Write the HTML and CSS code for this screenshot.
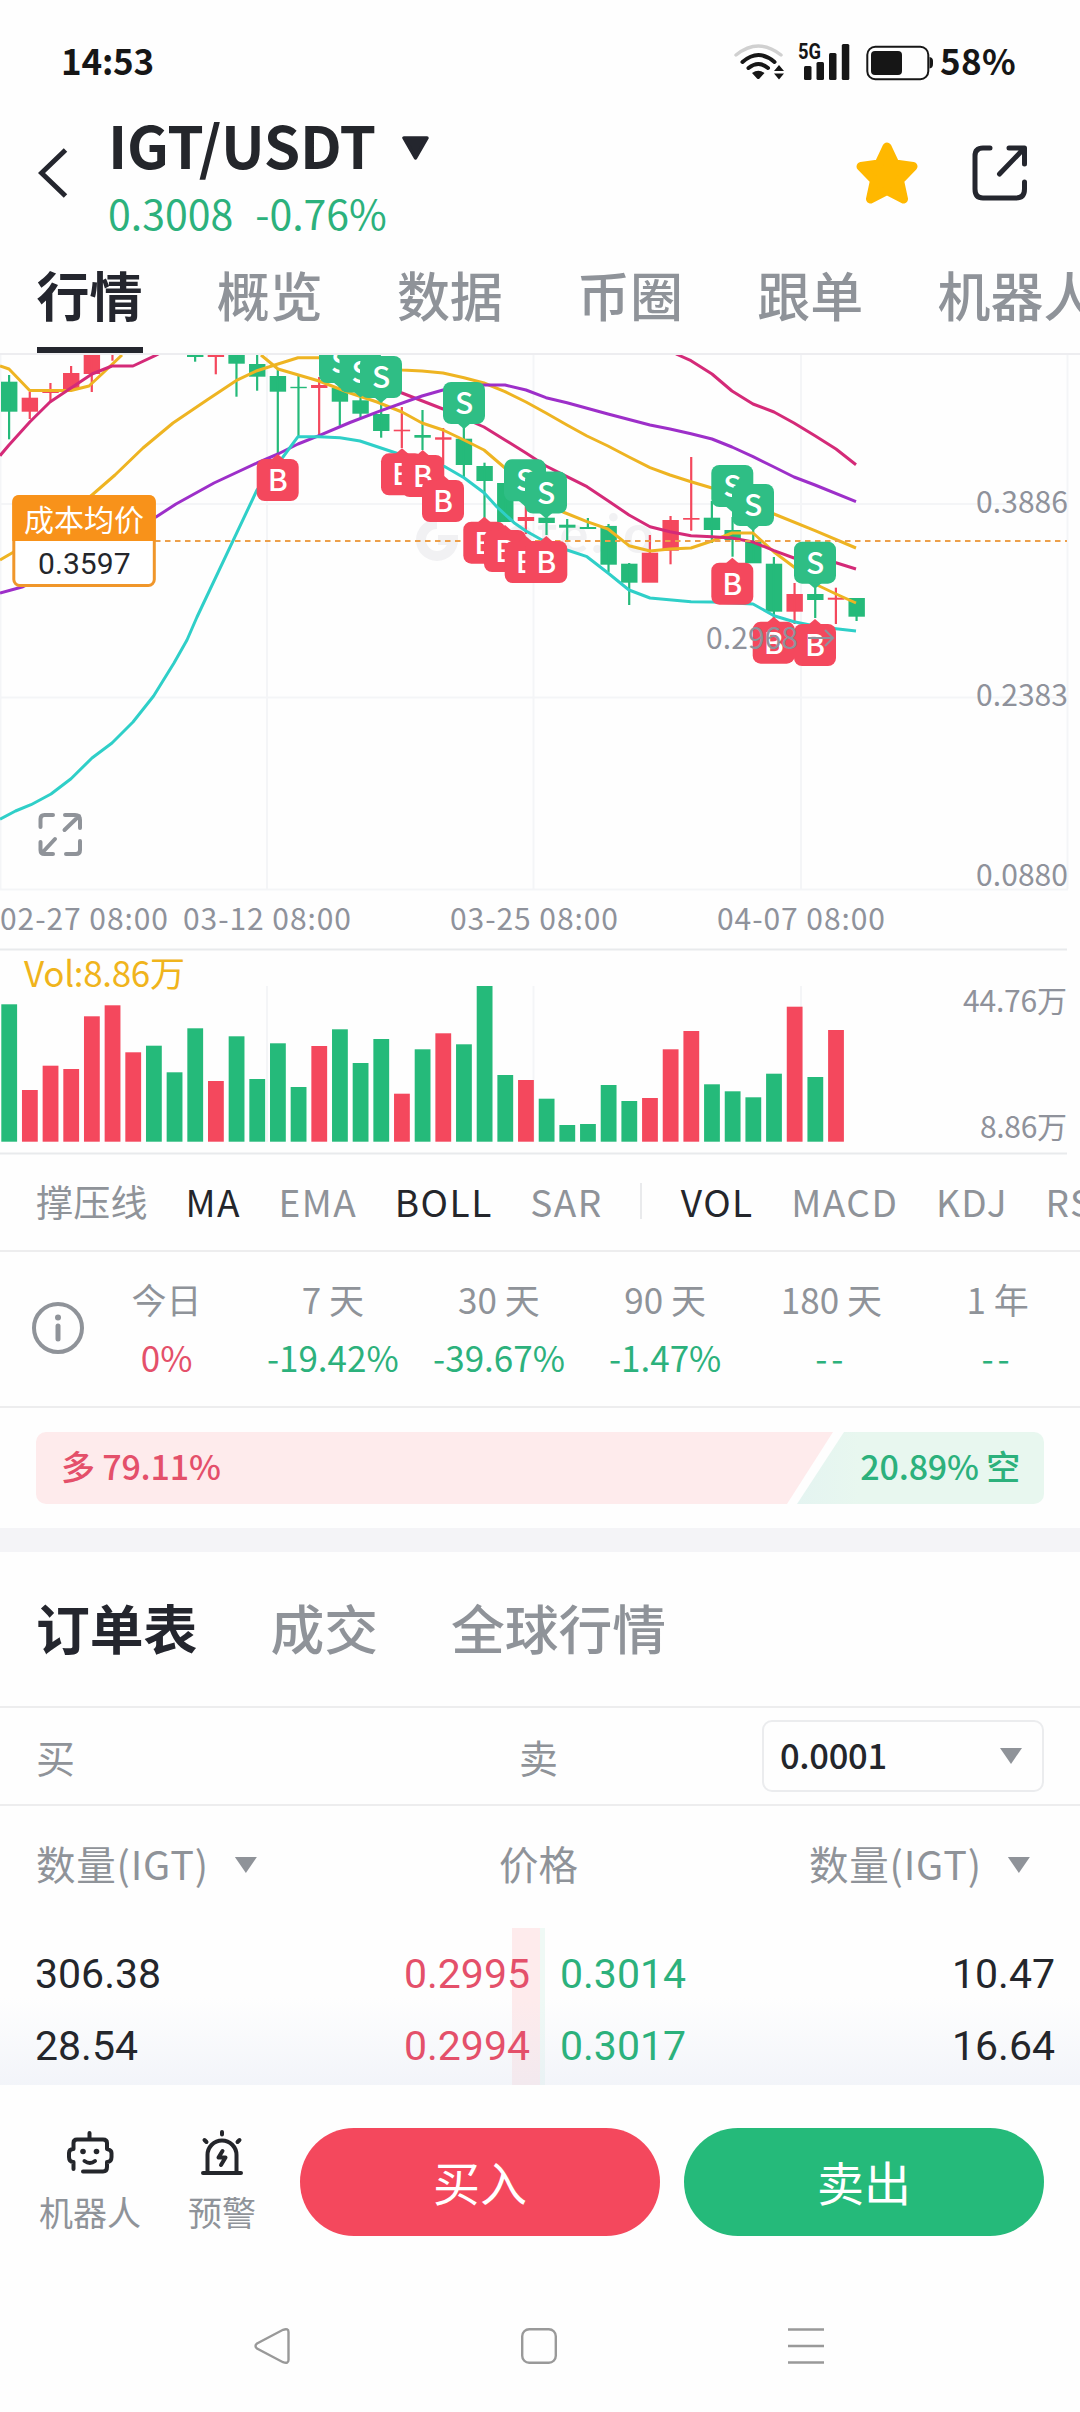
FILE: index.html
```html
<!DOCTYPE html>
<html lang="zh-CN">
<head>
<meta charset="utf-8">
<title>IGT/USDT</title>
<link rel="stylesheet" href="styles.css">
</head>
<body>
<div class="status">
  <span class="status-time">14:53</span>
  <svg class="status-icons" width="200" height="42" viewBox="734 41 200 42">
    <g fill="none" stroke-linecap="round">
      <path d="M736 55Q758.500 37 781 55" stroke="#d0d0d0" stroke-width="3.500"/>
      <path d="M742.500 62Q758.500 48 774.500 62" stroke="#161616" stroke-width="4"/>
      <path d="M748.500 68Q758.500 60 768 68" stroke="#161616" stroke-width="4"/>
    </g>
    <path d="M752 73Q758.500 68.500 764.500 73L759.500 78.500Q758.500 79.500 757 78.500ZM774 71L779 65L784 71ZM774 73.500H784L779 79.500Z" fill="#161616"/>
    <text x="798" y="59" class="net" textLength="23" lengthAdjust="spacingAndGlyphs">5G</text>
    <g fill="#161616">
      <rect x="804" y="66" width="7.500" height="14" rx="1.500"/><rect x="816.500" y="62" width="7.500" height="18" rx="1.500"/>
      <rect x="829" y="53" width="7.500" height="27" rx="1.500"/><rect x="841.800" y="44" width="7.500" height="36" rx="1.500"/>
      <rect x="871" y="51" width="31" height="24" rx="4"/><path d="M929.500 57Q933 57.500 933 61V64Q933 68 929.500 68.500Z"/>
    </g>
    <rect x="867.300" y="46.800" width="61" height="32.400" rx="8" fill="none" stroke="#161616" stroke-width="2"/>
  </svg>
  <span class="status-pct">58%</span>
</div>

<header class="header">
  <svg class="back" width="30" height="50" viewBox="0 0 30 50"><path d="M27.500 2L3.500 25L27.500 48" fill="none" stroke="#24262e" stroke-width="5"/></svg>
  <div class="pair">
    <div class="pair-name"><span class="pair-text">IGT/USDT</span>
      <svg width="29" height="24" viewBox="0 0 29 24"><path d="M3 2H26L14.500 22Z" fill="#24262e" stroke="#24262e" stroke-width="3.500" stroke-linejoin="round"/></svg>
    </div>
    <div class="pair-price"><span>0.3008</span><span>-0.76%</span></div>
  </div>
  <svg class="star" width="62" height="62" viewBox="0 0 62 62"><path d="M31 5L39 22L57 24.500L43.500 38.500L47.500 57L31 48.500L14.500 57L18.500 38.500L5 24.500L23 22Z" fill="#ffb800" stroke="#ffb800" stroke-width="9" stroke-linejoin="round"/></svg>
  <svg class="share" width="56" height="56" viewBox="0 0 56 56"><path d="M18 3H11Q3 3 3 11V44Q3 53 11 53H44Q52.500 53 52.500 44V37M37 3H52.500V19M52 3.500L27.500 29" fill="none" stroke="#24262e" stroke-width="5" stroke-linecap="round" stroke-linejoin="round"/></svg>
</header>

<nav class="tabs">
  <span class="tab active">行情</span><span class="tab">概览</span><span class="tab">数据</span><span class="tab">币圈</span><span class="tab">跟单</span><span class="tab">机器人</span>
</nav>

<svg class="chart" width="1080" height="800" viewBox="0 355 1080 800">
  <path class="grid" d="M0 504H1068M0 697.500H1068M0 889.500H1068M.5 355V889M267 355V889M533.500 355V889M801 355V889M1067.500 355V889M267 986V1142M533.500 986V1142M801 986V1142"/>
  <path class="rule" d="M0 949.500H1067M0 1153.500H1067"/>
  <g class="mark">
    <path d="M437 524A16 16 0 1 0 453 540H438" fill="none" stroke-width="10"/>
    <text x="476" y="553" textLength="178">gate.io</text>
  </g>
  <g id="candles"></g>
  <g class="lines">
    <polyline stroke="#eeb422" points="0,366 9,369 29.7,390.500 71,390.500 89,386 103,373 122,355"/>
    <polyline stroke="#eeb422" points="261,355 278,369 319,381 350,393 377,402 402,412 422,423 443,430 464,440 484,450 505,468 526,488 546,504 563,512 587,521.700 608,529 629,545.700 650,551 670,549 691,548 712,541 732,533 753,533 763,542 774,552 794,567 815,584 836,594 856,603"/>
    <polyline stroke="#eeb422" points="0,560 12,553 50,530 92,495 115,475 143,448 173,423 207,400 236,380.700 257,370.700 278,364 298,357.700 319,357.700 360,365 402,370 422,371 443,373 464,377.700 484,383 505,391.700 526,402 546,413 567,425 587,436 608,446 629,457 650,467.700 670,475 691,481.700 712,488 774,514 815,530.700 856,548"/>
    <polyline stroke="#d42a78" points="0,455.700 9,445 30,421.700 50,402 71,388 92,374 112,366 133,366 155,355.700 160,353"/>
    <polyline stroke="#d42a78" points="340,370 381,384 402,393 443,409 484,427 505,440 526,453 546,466 567,476.700 587,486.700 608,500.700 629,515 650,526.700 670,531.700 691,535.700 712,536.700 732,538 753,542 774,550.700 794,558 836,562.700 856,569"/>
    <polyline stroke="#d42a78" points="676,354 691,360.700 712,374 732,391 753,404 774,412 794,423 815,435.700 836,449 856,464.700"/>
    <polyline stroke="#9d2fc9" points="0,593 23,586.700 90,553 156,517 176,504 214,483 257,463 278,454 298,444 319,435.700 350,422.500 381,410.700 422,396 443,390 464,386 484,385 505,385 526,390 546,397.700 567,402.700 608,414 650,425 670,429 691,433.700 712,439 732,447 753,456.700 774,467 794,477 815,485 856,501.700"/>
    <polyline stroke="#2fcfc8" points="0,819.300 15.500,811 31,804.700 51,794 71,778.700 92,758 112,743 133,722 153.600,696 174,663 187,640 197,617 257,490 283,457 298,436.700 319,436.700 340,437.700 360,441 381,448 402,455 422,460 445,466.700 464,477.700 484,492.700 497,507 514,522.700 526,531 542,540 567,550 587,556.700 608,573 629,590 650,598 691,601.700 712,602 753,604 774,615.700 794,621.700 815,626 836,628.700 856,631"/>
  </g>
  <path class="cost-line" d="M155 541H1067"/>
  <g id="badges"></g>
  <g class="axis">
    <text x="976" y="513" textLength="92">0.3886</text>
    <text x="976" y="706" textLength="92">0.2383</text>
    <text x="976" y="886" textLength="92">0.0880</text>
    <text x="706" y="648.500" textLength="92">0.2968</text>
    <text x="0" y="930" textLength="168">02-27 08:00</text>
    <text x="183" y="930" textLength="168">03-12 08:00</text>
    <text x="450" y="930" textLength="168">03-25 08:00</text>
    <text x="717" y="930" textLength="168">04-07 08:00</text>
    <text x="963" y="1012" textLength="104">44.76万</text>
    <text x="980" y="1138" textLength="87">8.86万</text>
  </g>
  <path d="M808 638H832M825 630L833 638L825 646" fill="none" stroke="#8f929b" stroke-width="2"/>
  <text class="vol" x="24" y="987" textLength="161">Vol:8.86万</text>
  <g>
    <rect x="13.800" y="496.500" width="140.500" height="89" rx="6" fill="#fff" stroke="#f0962a" stroke-width="3"/>
    <path d="M12.300 541V502Q12.300 495 19.300 495H148.700Q155.700 495 155.700 502V541Z" fill="#f8921a"/>
    <text class="cost-name" x="24" y="531" textLength="120">成本均价</text>
    <text class="cost-value" x="38" y="574" textLength="92.500">0.3597</text>
  </g>
  <path d="M40.500 827V819Q40.500 815 44.500 815H53M65 815H75Q80 815 80 820V828M79 816L64.500 830M80 841V850Q80 854 76 854H66M55 839L42 853M40.500 842V850Q40.500 854 44.500 854H53" fill="none" stroke="#8f9399" stroke-width="4" stroke-linecap="round" stroke-linejoin="round"/>
  <g id="volumes"></g>
</svg>

<div class="indicators">
  <span>撑压线</span><span class="on">MA</span><span>EMA</span><span class="on">BOLL</span><span>SAR</span><i class="sep"></i><span class="on">VOL</span><span>MACD</span><span>KDJ</span><span>RSI</span>
</div>

<section class="stats">
  <svg class="info" width="54" height="54" viewBox="0 0 54 54"><circle cx="27" cy="27" r="24" fill="none" stroke="#8f9399" stroke-width="4"/><circle cx="27" cy="16.500" r="3" fill="#8f9399"/><path d="M27 25V38" stroke="#8f9399" stroke-width="5" stroke-linecap="round"/></svg>
  <div class="stat"><span>今日</span><b class="red">0%</b></div>
  <div class="stat"><span>7 天</span><b>-19.42%</b></div>
  <div class="stat"><span>30 天</span><b>-39.67%</b></div>
  <div class="stat"><span>90 天</span><b>-1.47%</b></div>
  <div class="stat"><span>180 天</span><b class="none">--</b></div>
  <div class="stat"><span>1 年</span><b class="none">--</b></div>
</section>

<section class="ratio">
  <div class="ratio-bar">
    <div class="long">多 79.11%</div>
    <div class="short">20.89% 空</div>
  </div>
</section>

<nav class="book-tabs"><span class="active">订单表</span><span>成交</span><span>全球行情</span></nav>
<div class="book-filter">
  <span class="buy-label">买</span><span class="sell-label">卖</span>
  <div class="select"><span>0.0001</span><i class="caret"></i></div>
</div>
<div class="book-head">
  <span class="left">数量(IGT)<i class="caret"></i></span><span class="mid">价格</span><span class="right">数量(IGT)<i class="caret"></i></span>
</div>
<div class="book">
  <div class="row"><span class="qty">306.38</span><span class="bid">0.2995</span><span class="ask">0.3014</span><span class="qty end">10.47</span></div>
  <div class="row"><span class="qty">28.54</span><span class="bid">0.2994</span><span class="ask">0.3017</span><span class="qty end">16.64</span></div>
</div>

<footer class="actions">
  <div class="tool robot">
    <svg width="50" height="46" viewBox="65 2130 50 46"><g fill="none" stroke="#24262b" stroke-width="4" stroke-linecap="round" stroke-linejoin="round"><path d="M89.500 2133V2138M73.500 2169V2162Q69 2162 69 2157V2153Q69 2149 73.500 2149V2143Q73.500 2139.500 77 2139.500H103Q107 2139.500 107 2143V2149Q111.500 2150 111.500 2153V2157Q111.500 2162 107 2162V2167Q107 2171.500 103 2171.500H83M84.500 2161Q90 2165 95 2161"/></g><circle cx="83" cy="2151.500" r="2.800" fill="#24262b"/><circle cx="96.500" cy="2151.500" r="2.800" fill="#24262b"/></svg>
    <span>机器人</span>
  </div>
  <div class="tool alarm">
    <svg width="48" height="46" viewBox="198 2130 48 46"><path d="M203 2173H241M207.500 2172V2155A14.500 14.500 0 0 1 236.500 2155V2172M222 2132V2134.500M204.500 2140L206.500 2142M239.500 2140L237.500 2142M222.500 2151L218.500 2157.500H225.500L221 2165" fill="none" stroke="#24262b" stroke-width="4" stroke-linecap="round" stroke-linejoin="round"/></svg>
    <span>预警</span>
  </div>
  <button class="btn buy">买入</button>
  <button class="btn sell">卖出</button>
</footer>
<div class="sysnav">
  <svg width="36" height="36" viewBox="0 0 36 36"><path d="M3 15.500L29 1.800Q34.500 0 34.500 4V32Q34.500 36 29 34.200L3 20.500Q0 18 3 15.500Z"/></svg>
  <svg width="36" height="36" viewBox="0 0 36 36"><rect x="1.200" y="1.200" width="33.600" height="33.600" rx="7"/></svg>
  <svg width="36" height="36" viewBox="0 0 36 36"><path d="M0 1.500H36M0 18H36M0 34.500H36"/></svg>
</div>
<script src="chart.js"></script>
</body>
</html>
```
FILE: styles.css
```css
* { box-sizing: border-box; }
body {
  margin: 0;
  width: 1080px;
  height: 2412px;
  overflow: hidden;
  background: #fefefe;
  color: #24262b;
  font-family: "Noto Sans CJK SC", "Noto Sans", sans-serif;
}
svg { display: block; flex: none; }
span, b { white-space: nowrap; }

.status { display: flex; align-items: center; height: 112px; padding: 6px 60px 0 61px; font-size: 35px; font-weight: 700; color: #161616; }
.status-time { letter-spacing: -0.2px; }
.status-icons { margin: 6px 6px 0 auto; }
.status-pct { width: 80px; letter-spacing: 0.3px; }
.net { font: 700 22px Roboto, sans-serif; fill: #161616; }

.header { display: flex; align-items: center; height: 122px; padding: 0 52px 0 38px; }
.pair { margin-left: 40px; }
.pair-name { display: flex; align-items: center; gap: 19px; height: 64px; font-size: 58.5px; font-weight: 700; line-height: 68px; }
.pair-name svg { margin-top: 7px; }
.pair-text { width: 274px; letter-spacing: -0.3px; }
.pair-price { display: flex; gap: 22px; margin-top: 14px; height: 44px; line-height: 44px; font-size: 41px; color: #2cb17c; }
.star { margin-left: auto; }
.share { margin-left: 54px; }

.tabs { display: flex; gap: 74.200px; height: 121px; padding-left: 36.500px; border-bottom: 2px solid #ededf0; overflow: hidden; }
.tab { flex: none; height: 119px; padding-top: 7px; line-height: 106px; font-size: 53px; font-weight: 500; color: #8f9399; border-bottom: 6px solid transparent; }
.tab.active { color: #24262e; border-color: #24262e; font-weight: 700; }

.chart { font-family: "Noto Sans CJK SC", sans-serif; }
.grid { stroke: #f4f5f7; stroke-width: 2; fill: none; }
.rule { stroke: #e8eaec; stroke-width: 2; fill: none; }
.mark { fill: #f1f1f3; stroke: #f1f1f3; }
.mark text { font: 700 54px Lato, sans-serif; stroke: none; }
.lines polyline { fill: none; stroke-width: 3; stroke-linejoin: round; }
.cost-line { stroke: #eda04a; stroke-width: 2; stroke-dasharray: 5.500 4.500; }
.axis text { font-size: 30px; fill: #8f929b; }
.vol { font-size: 35px; fill: #f0b41c; }
.cost-name { font-size: 30px; fill: #fff; }
.cost-value { font: 30px Roboto, sans-serif; fill: #24262b; }
.badge-text { font-size: 30px; font-weight: 500; fill: #fff; text-anchor: middle; }

.indicators { display: flex; align-items: center; gap: 37.500px; height: 97px; padding: 0 0 4px 36px; border-bottom: 2px solid #ededee; font-size: 37px; letter-spacing: 1.500px; color: #8f9399; overflow: hidden; }
.indicators .on { color: #24262b; }
.indicators span { flex: none; }
.indicators span:first-child { letter-spacing: 0.300px; }
.sep { flex: none; width: 2px; height: 36px; margin-right: 1px; background: #e9eaec; }

.stats { display: flex; height: 156px; border-bottom: 2px solid #ededee; padding-left: 31px; }
.info { margin: 49px -1.500px 0 0; }
.stat { flex: none; width: 166.200px; padding-top: 25px; display: flex; flex-direction: column; align-items: center; gap: 14px; line-height: 44px; font-size: 35px; color: #8f9399; }
.stat b { font-weight: 400; color: #2cb17c; }
.stat b.red { color: #e4506a; }
.stat b.none { letter-spacing: 4px; }

.ratio { padding: 24px 36px; border-bottom: 24px solid #f4f4f7; }
.ratio-bar { display: flex; height: 72px; border-radius: 10px; overflow: hidden; font-size: 34px; font-weight: 500; line-height: 68px; letter-spacing: -0.200px; }
.long { width: 797px; padding-left: 25px; color: #e4506a; background: #feebec; clip-path: polygon(0 0, 100% 0, 751px 100%, 0 100%); }
.short { flex: 1; margin-left: -36px; padding-right: 24px; text-align: right; color: #2cb17c; background: linear-gradient(90deg, #e4f4f1, #e8f7ef 25%); clip-path: polygon(47px 0, 100% 0, 100% 100%, 0 100%); }

.book-tabs { display: flex; gap: 73px; height: 156px; padding-left: 36px; border-bottom: 2px solid #ededee; font-size: 53.800px; line-height: 150px; font-weight: 500; color: #8f9399; }
.book-tabs .active { color: #24262e; font-weight: 700; }
.book-filter { display: grid; grid-template-columns: 483px 243px 282px; align-items: center; height: 98px; padding-left: 36px; border-bottom: 2px solid #ededee; font-size: 39px; color: #8f9399; }
.select { display: flex; align-items: center; justify-content: space-between; height: 72px; padding: 0 20px 0 16px; border: 2px solid #ebecee; border-radius: 10px; font-size: 34.500px; font-weight: 500; color: #24262b; line-height: 64px; }
.select span { padding-bottom: 4px; letter-spacing: -0.300px; }
.caret { display: inline-block; width: 22px; height: 16px; background: #8f9399; clip-path: polygon(0 0, 100% 0, 50% 100%); }
.book-head { display: grid; grid-template-columns: 463px 1fr 271px; height: 122px; padding: 0 0 0 36px; font-size: 39.500px; line-height: 113px; color: #8f9399; }
.book-head .left, .book-head .right { letter-spacing: 0.800px; }
.book-head .caret { margin-left: 26px; vertical-align: 7px; }

.book { position: relative; z-index: 0; height: 157px; padding-top: 10px; background: linear-gradient(90deg, transparent 512px, #feebec 512px, #feebec 540.500px, #eff9f5 540.500px, #eff9f5 545px, transparent 545px); font-family: Roboto, "Noto Sans CJK SC", sans-serif; font-size: 41px; }
.book::after { content: ""; position: absolute; z-index: -1; inset: 70px 0 0; background: linear-gradient(rgba(225, 230, 242, 0), rgba(225, 230, 242, 0.4)); }
.row { display: grid; grid-template-columns: 300px 195px 229px 1fr; height: 72px; line-height: 72px; padding: 0 25px 0 35px; }
.bid { text-align: right; color: #e4506a; }
.ask { padding-left: 30px; color: #2cb17c; }
.end { text-align: right; }

.actions { display: flex; height: 195px; padding: 43px 36px 0 39px; }
.tool { display: flex; flex-direction: column; align-items: center; font-size: 34px; line-height: 44px; color: #8f9399; }
.tool svg { margin: 2px 0 14px; }
.robot { width: 102px; }
.alarm { width: 68px; margin: 0 44px 0 47px; }
.btn { width: 360px; height: 108px; padding: 0 0 3px; border: 0; border-radius: 54px; font: 400 47px/1 "Noto Sans CJK SC", sans-serif; color: #fff; }
.buy { background: #f4485d; }
.sell { margin-left: 24px; background: #25ba7a; }
.sysnav { display: flex; gap: 231px; padding: 48px 0 0 254px; }
.sysnav svg { fill: none; stroke: #999; stroke-width: 2.400; }
```
FILE: chart.js
```javascript
const GREEN = '#25ba7a', RED = '#f4485d';
const PITCH = 20.67, FIRST = 9;

// [index, colour, body top, body bottom, wick top, wick bottom]
const candles = [
  [0,'g',381.7,411.7,375,439.3],[1,'r',397.7,411.7,391.7,419],[2,'r',391,393,383,402.3],[3,'r',373,389.5,366,389],
  [4,'r',350,374,350,392],[5,'r',350,352,350,360.7],[9,'g',354,357,354,361.7],[10,'r',354,357,354,374.3],
  [11,'g',350,363.7,350,396.7],[12,'g',364,376.7,350,390.7],[13,'g',376,391.7,368,455],[14,'g',386.8,388.2,375,436.7],
  [15,'r',385,388,377,435.7],[16,'g',388,401.7,380,425.7],[17,'g',400.3,413.7,393,418],[18,'g',414,431,398,437.7],
  [19,'r',429.7,431.3,407,448],[20,'g',435,437.7,410,450],[21,'r',437.3,439.7,428,480],[22,'g',438.7,465,423,477],
  [23,'g',466,481,462.7,518],[24,'g',483,522,480,522],[25,'r',517,521,500,534],[26,'g',517.7,523,511,535],
  [27,'g',524.7,527.7,519,540.7],[28,'g',527,529,518,529],[29,'g',526,564.7,524,572],[30,'g',563.7,582.7,563,605],
  [31,'r',552.7,582.7,535,582],[32,'r',520,550.7,516,564.3],[33,'r',518,519.7,457,530.7],[34,'g',517.7,530,501,543],
  [35,'g',530,540,517,556.7],[36,'g',541,563.3,527,563],[37,'g',563.7,611.7,557,620],[38,'r',594,611.7,583,624],
  [39,'g',594,600,585,618],[40,'r',597.7,599.7,587.7,624],[41,'g',598,616.7,598,621]
];

// [colour, bar top]
const volumes = [
  ['g',1004.3],['r',1090],['r',1065.7],['r',1069],['r',1016.3],['r',1005.3],['r',1052.3],['g',1045.7],['g',1072.3],
  ['g',1028.3],['r',1081],['g',1036.3],['g',1079],['g',1043.3],['g',1087],['r',1046],['g',1029.3],['g',1063],
  ['g',1039],['r',1093.7],['g',1049.3],['r',1033.3],['g',1044.3],['g',986],['g',1075],['r',1080],['g',1098.7],
  ['g',1125],['g',1124],['g',1085],['g',1101],['r',1098],['r',1049.3],['r',1031],['g',1084.3],['g',1091.3],
  ['g',1097.3],['g',1073.7],['r',1006.7],['g',1077],['r',1030]
];

// [side, left, top]
const badges = [
  ['S',319,341],['S',339.5,350.5],['S',360,356],['S',443,382],['S',504,459.3],['S',525,471.5],['S',711.3,465],
  ['S',732,484],['S',794,541.7],['B',256.7,459],['B',381,453.3],['B',401.7,455],['B',422,480],['B',463.3,521.7],
  ['B',484,530],['B',504.7,541],['B',525.3,541],['B',711.3,562.7],['B',752.7,621.7],['B',794,624]
];

const colour = c => (c === 'g' ? GREEN : RED);
const x = i => FIRST + i * PITCH;

document.getElementById('candles').innerHTML = candles.map(([i, c, t, b, wt, wb]) =>
  `<g fill="${colour(c)}"><rect x="${x(i) - 8}" y="${t}" width="16.400" height="${b - t}"/>` +
  `<rect x="${x(i) - 1}" y="${wt}" width="2.200" height="${wb - wt}"/></g>`).join('');

document.getElementById('volumes').innerHTML = volumes.map(([c, t], i) =>
  `<rect fill="${colour(c)}" x="${x(i) - 7.7}" y="${t}" width="15.800" height="${1141.7 - t}"/>`).join('');

document.getElementById('badges').innerHTML = badges.map(([s, l, t]) => {
  const cx = l + 21;
  const tip = s === 'S' ? `M${cx - 7} ${t + 41}L${cx} ${t + 47}L${cx + 7} ${t + 41}Z` : `M${cx - 7} ${t + 1}L${cx} ${t - 5}L${cx + 7} ${t + 1}Z`;
  const fill = s === 'S' ? '#2fbe85' : RED;
  return `<g fill="${fill}"><rect x="${l}" y="${t}" width="42" height="42" rx="8"/><path d="${tip}"/>` +
    `<text class="badge-text" x="${cx}" y="${t + 32}">${s}</text></g>`;
}).join('');
```
